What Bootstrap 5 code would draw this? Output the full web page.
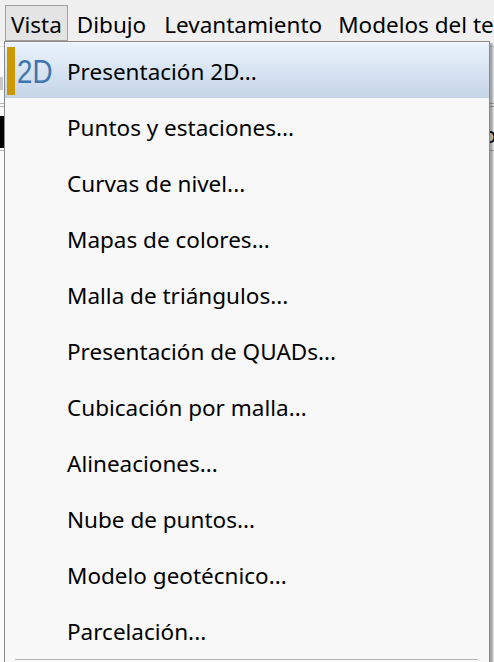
<!DOCTYPE html>
<html lang="es">
<head>
<meta charset="utf-8">
<title>Vista</title>
<link rel="stylesheet" href="https://cdn.jsdelivr.net/npm/bootstrap@5.3.0/dist/css/bootstrap.min.css">
<style>
html,body{margin:0;height:662px;overflow:hidden;background:#fafafa}
body{font-family:"Noto Sans","Open Sans","Liberation Sans",sans-serif;font-size:22.5px;color:#000;position:relative}
.menubar{height:41px;background:#f0f0f0;padding:5px 0 0 5px;overflow:hidden}
.menubar-item{height:36px;line-height:38px;padding:0 5px;border:1px solid transparent;white-space:nowrap;flex:none}
.menubar-item.is-open{background:#e4e4e4;border-color:#a0a0a0;margin-right:3px}
.menubar-item.tight-a{margin-right:6px}
.menubar-item.tight-b{margin-right:4px}
.bg-box{position:absolute;left:0;top:77px;width:3px;height:13px;background:#c8c8c8}
.bg-line{position:absolute;left:0;width:100%;height:1px;background:#b4b4b4}
.line-a{top:103px}.line-b{top:106px}.line-c{top:150px}.line-d{top:46px;background:#dcdcdc}
.backdrop-strip{position:absolute;left:0;top:116px;width:4px;height:32px;background:#000}
.bg-glyph{position:absolute;left:483px;top:120px;font-size:22.5px;line-height:30px;color:#000}
.drop{position:absolute;left:4px;top:41px;width:486px;height:640px;background:#f8f8f8;border:1px solid #8a8a8a;box-shadow:3px 2px 2px rgba(0,0,0,.35);padding:1px 0 0 0}
.drop-row{height:56px;display:flex;align-items:center;padding-left:62px;padding-top:3px;white-space:nowrap;line-height:1}
.drop-row.is-active{height:55px;margin-bottom:1px;padding-top:5px;background:linear-gradient(#eaf3fd,#c5d5e7);border-bottom:1px solid #c3d0e0;position:relative}
.marker{position:absolute;left:2px;top:4px;width:8px;height:48px;background:#cc9900}
.iconlabel{position:absolute;left:12px;top:9px;font-size:33px;line-height:40px;color:#3f75ad;font-family:"Liberation Sans",sans-serif;transform:scaleX(.84);transform-origin:left}
.sep{height:1px;background:#b5b5b5;margin:0 11px 0 10px}
</style>
</head>
<body>
<nav class="menubar d-flex align-items-start">
<div class="menubar-item is-open">Vista</div>
<div class="menubar-item tight-a">Dibujo</div>
<div class="menubar-item tight-b">Levantamiento</div>
<div class="menubar-item">Modelos del terreno</div>
</nav>
<div class="bg-box"></div>
<div class="bg-line line-d"></div>
<div class="bg-line line-a"></div>
<div class="bg-line line-b"></div>
<div class="bg-line line-c"></div>
<div class="backdrop-strip"></div>
<span class="bg-glyph">o)</span>
<div class="drop">
<div class="drop-row is-active"><span class="marker"></span><span class="iconlabel">2D</span>Presentación 2D...</div>
<div class="drop-row">Puntos y estaciones...</div>
<div class="drop-row">Curvas de nivel...</div>
<div class="drop-row">Mapas de colores...</div>
<div class="drop-row">Malla de triángulos...</div>
<div class="drop-row">Presentación de QUADs...</div>
<div class="drop-row">Cubicación por malla...</div>
<div class="drop-row">Alineaciones...</div>
<div class="drop-row">Nube de puntos...</div>
<div class="drop-row">Modelo geotécnico...</div>
<div class="drop-row">Parcelación...</div>
<div class="sep"></div>
</div>
<script src="https://cdn.jsdelivr.net/npm/bootstrap@5.3.0/dist/js/bootstrap.bundle.min.js"></script>
</body>
</html>
